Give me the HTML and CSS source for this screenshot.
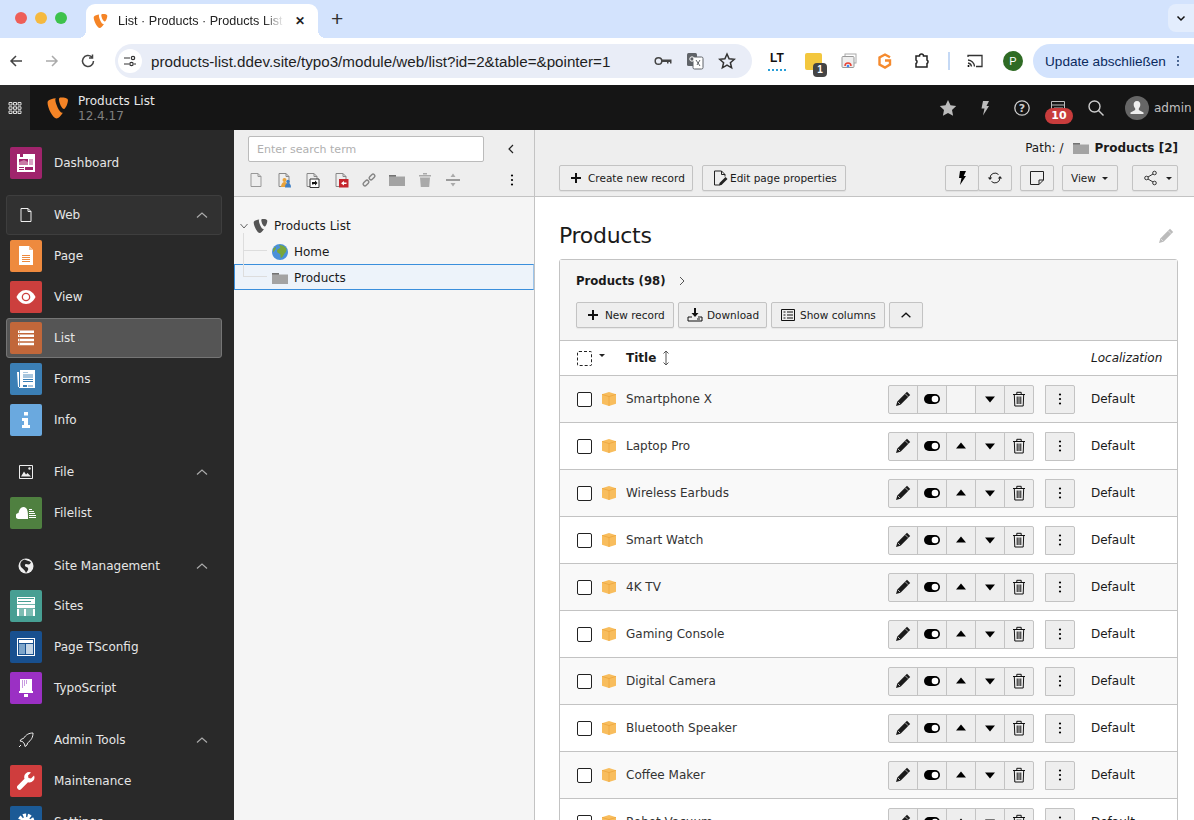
FILE: index.html
```html
<!DOCTYPE html>
<html lang="en">
<head>
  <meta charset="UTF-8" />
  <meta name="viewport" content="width=device-width, initial-scale=1.0" />
  <title>List - Products</title>
  <link rel="stylesheet" href="styles.css">
</head>
<body>
  <svg class="defs" width="0" height="0">
    <symbol id="typo3" viewBox="0 0 16 16"><path d="M11.9 11c-.2.1-.4.1-.6.1-1.8 0-4.4-6.3-4.4-8.4 0-.8.2-1 .4-1.2C5.1 1.7 2.8 2.4 2 3.4c-.2.2-.3.6-.3 1.1C1.7 7.8 5.2 15 7.7 15c1.2 0 3.1-1.9 4.2-4zM10.7 1c2.3 0 4.6.4 4.6 1.7 0 2.7-1.7 5.9-2.6 5.9-1.5 0-3.4-4.2-3.4-6.3C9.3 1.4 9.7 1 10.7 1z"/></symbol>
    <symbol id="chev-up" viewBox="0 0 16 16"><path d="M3 10.500 8 6l5 4.500" fill="none" stroke="currentColor" stroke-width="1.200"/></symbol>
    <symbol id="page" viewBox="0 0 16 16"><path d="M3 1.500h7l3 3v10H3zM10 1.500v3h3" fill="none" stroke="currentColor"/></symbol>
    <symbol id="folder" viewBox="0 0 16 16"><path d="M0 3h7v1.500h9V14H0z" fill="#a3a3a3"/><path d="M0 3h7v1.500H0z" fill="#737373"/></symbol>
    <symbol id="pencil" viewBox="0 0 16 16"><path d="M12 .800 15.200 4 5.500 13.700 1 15l1.300-4.500z" fill="currentColor"/><path d="m10.300 2.800 2.900 2.900M2.800 10.800l2.400 2.400" stroke="#eee" stroke-width=".7"/></symbol>
    <symbol id="toggle" viewBox="0 0 16 16"><rect y="3" width="16" height="10" rx="5"/><circle cx="11" cy="8" r="3.300" fill="#fff"/></symbol>
    <symbol id="tri-up" viewBox="0 0 16 16"><path d="M8 4.500l5 6H3z"/></symbol>
    <symbol id="tri-down" viewBox="0 0 16 16"><path d="M8 11.500l-5-6h10z"/></symbol>
    <symbol id="trash" viewBox="0 0 16 16"><path d="M2 3.500h12M5.800 3.500V1.300h4.400v2.200M3.300 3.500l.5 11.500h8.400l.5-11.500M6.200 5.500v7.500M8 5.500v7.500M9.800 5.500v7.500" fill="none" stroke="#111"/></symbol>
    <symbol id="dots" viewBox="0 0 16 16"><circle cx="8" cy="3.500" r="1.100"/><circle cx="8" cy="8" r="1.100"/><circle cx="8" cy="12.500" r="1.100"/></symbol>
    <symbol id="cube" viewBox="0 0 16 16"><path d="M8 1l7 2.300v9.400L8 15l-7-2.300V3.300z" fill="#f8bd5d"/><path d="M1 3.300 8 5.600l7-2.300M8 5.600V15" fill="none" stroke="#eda63c" stroke-width=".8"/></symbol>
    <symbol id="plus" viewBox="0 0 16 16"><path d="M8 3v10M3 8h10" stroke="#111" stroke-width="2"/></symbol>
  </svg>

  <div class="tabbar">
    <div class="lights"><i class="light red"></i><i class="light amber"></i><i class="light green"></i></div>
    <div class="tab">
      <svg class="tab-logo" width="16" height="16"><use href="#typo3"/></svg>
      <span class="tab-title">List · Products · Products List</span>
      <span class="tab-x">✕</span>
    </div>
    <span class="tab-new">+</span>
    <span class="tab-more"><svg width="12" height="12" viewBox="0 0 12 12"><path d="M2.500 4.500 6 8l3.500-3.500" fill="none" stroke="#111" stroke-width="1.500"/></svg></span>
  </div>

  <div class="toolbar">
    <svg class="nav" width="16" height="16" viewBox="0 0 16 16"><path d="M14 8H3M8 3 3 8l5 5" fill="none" stroke="#444" stroke-width="1.500"/></svg>
    <svg class="nav" width="16" height="16" viewBox="0 0 16 16"><path d="M2 8h11M8 3l5 5-5 5" fill="none" stroke="#aaa" stroke-width="1.500"/></svg>
    <svg class="nav" width="16" height="16" viewBox="0 0 16 16"><path d="M13.500 8A5.500 5.500 0 1 1 11.800 4M12.500 1.500V5H9" fill="none" stroke="#444" stroke-width="1.500"/></svg>
    <div class="omnibox">
      <span class="site-icon"><svg width="14" height="14" viewBox="0 0 14 14"><path d="M1 4h6M11 10h2M1 10h5" stroke="#333" stroke-width="1.200"/><circle cx="10" cy="4" r="1.700" fill="none" stroke="#333" stroke-width="1.200"/><circle cx="8.500" cy="10" r="1.700" fill="none" stroke="#333" stroke-width="1.200"/></svg></span>
      <span class="url">products-list.ddev.site/typo3/module/web/list?id=2&amp;table=&amp;pointer=1</span>
      <svg class="omni-icon" width="18" height="18" viewBox="0 0 18 18"><circle cx="4.500" cy="9" r="3.300" fill="none" stroke="#444" stroke-width="1.500"/><path d="M7.500 7.500h10v4h-1.500V10h-1.500v1.500H13V10H7.500z" fill="#444"/></svg>
      <svg class="omni-icon" width="18" height="18" viewBox="0 0 18 18"><rect x="1" y="1" width="10" height="13" rx="1.500" fill="#5f6368"/><rect x="7" y="5" width="10" height="12" rx="1.500" fill="#fff" stroke="#5f6368"/><path d="m10 8 4 6M14 8l-3 5" stroke="#5f6368"/><circle cx="6" cy="7" r="2.200" fill="none" stroke="#fff"/></svg>
      <svg class="omni-icon" width="18" height="18" viewBox="0 0 18 18"><path d="M9 2l2.100 4.800 5.200.5-3.900 3.400 1.200 5.100L9 13.100l-4.600 2.700 1.200-5.100-3.900-3.400 5.200-.5z" fill="none" stroke="#333" stroke-width="1.500"/></svg>
    </div>
    <div class="ext-icons">
      <span class="ext ext-lt">LT</span>
      <span class="ext ext-yellow"><b>1</b></span>
      <svg class="ext" width="16" height="16" viewBox="0 0 16 16"><rect x="4" y="1" width="11" height="9" fill="none" stroke="#aaa"/><rect x="1" y="3.500" width="12" height="11" rx="1" fill="#eee" stroke="#999"/><path d="M4 13a3 3 0 0 1 6 0" fill="none" stroke="#e94235" stroke-width="1.500"/><circle cx="7" cy="13" r="1.300" fill="#4285f4"/></svg>
      <svg class="ext" width="18" height="18" viewBox="0 0 18 18"><path d="M14 5.300 9 2.500 3.500 5.500v7L9 15.500l5-3V8.500H9" fill="none" stroke="#f58a2e" stroke-width="2.400"/></svg>
      <svg class="ext" width="18" height="18" viewBox="0 0 18 18"><path d="M3 4h3.500a2 2 0 0 1 4 0H14v4a2 2 0 0 1 0 3.500V15H3v-3.500a2 2 0 0 0 0-3.500z" fill="none" stroke="#222" stroke-width="1.500"/></svg>
      <i class="ext-sep"></i>
      <svg class="ext" width="18" height="18" viewBox="0 0 18 18"><path d="M2 5V3.500h14v11h-6M2 8a7 7 0 0 1 6.500 6.500M2 11a4 4 0 0 1 3.500 3.500" fill="none" stroke="#333" stroke-width="1.300"/><circle cx="2.500" cy="14" r="1"/></svg>
      <span class="avatar-p">P</span>
    </div>
    <div class="update"><span>Update abschließen</span><svg width="14" height="16" fill="#1b3a6b"><use href="#dots"/></svg></div>
  </div>

  <header class="topbar">
    <div class="menu-toggle">
      <svg width="14" height="14" viewBox="0 0 14 14" fill="none" stroke="#ddd"><path d="M1 1.500h3v2.500H1zM5.500 1.500h3v2.500h-3zM10 1.500h3v2.500h-3zM1 5.800h3v2.500H1zM5.500 5.800h3v2.500h-3zM10 5.800h3v2.500h-3zM1 10h3v2.500H1zM5.500 10h3v2.500h-3zM10 10h3v2.500h-3z"/></svg>
    </div>
    <svg class="brand-logo" width="24" height="24" fill="#f58426"><use href="#typo3"/></svg>
    <div class="brand">
      <div class="brand-name">Products List</div>
      <div class="brand-version">12.4.17</div>
    </div>
    <div class="top-tools">
      <svg class="top-tool" width="18" height="18" viewBox="0 0 18 18" fill="#bbb"><path d="M9 1l2.500 5.300 5.700.7-4.200 4 1.100 5.800L9 14l-5.100 2.800L5 11 .8 7l5.700-.7z"/></svg>
      <svg class="top-tool" width="18" height="18" viewBox="0 0 18 18" fill="#bbb"><path d="M7 2h6l-2.500 5H13l-6 9.500L8.500 9.500H5.500z"/></svg>
      <svg class="top-tool" width="18" height="18" viewBox="0 0 18 18"><circle cx="9" cy="9" r="7.200" fill="none" stroke="#ccc" stroke-width="1.300"/><text class="help-mark" x="9" y="13" text-anchor="middle">?</text></svg>
      <span class="top-tool notes">
        <svg width="16" height="16" viewBox="0 0 16 16" fill="none" stroke="#bbb"><path d="M1.500 1.500h13v13h-13zM1.500 5h13M4 8h9M4 11h9"/></svg>
        <b class="badge">10</b>
      </span>
      <svg class="top-tool" width="18" height="18" viewBox="0 0 18 18" fill="none" stroke="#ccc" stroke-width="1.400"><circle cx="7.500" cy="7.500" r="5.500"/><path d="m11.500 11.500 5 5"/></svg>
      <span class="user-pic"><svg width="24" height="24" viewBox="0 0 24 24"><circle cx="12" cy="12" r="12" fill="#666"/><path d="M12 5c2.400 0 3.600 1.800 3.300 4.200-.2 1.300-.8 2.500-1.500 3.200v1.600l4.700 2.500V18h-13v-1.500l4.700-2.500v-1.600c-.7-.7-1.300-1.900-1.500-3.200C8.400 6.800 9.600 5 12 5z" fill="#eee"/></svg></span>
      <span class="user-name">admin</span>
    </div>
  </header>

  <div class="main">
    <nav class="sidebar">
      <a class="mod"><span class="mod-icon c-dash"><svg width="18" height="18" viewBox="0 0 18 18"><path d="M0 0h18v18H0z" fill="#fff"/><path d="M2 5h9v6H2z" fill="#a0246c"/><path d="M2 8l5-2 4 2v3H2z" fill="#c97aa6"/><path d="M12 5h4v6h-4z" fill="#d9a3c4"/><path d="M2 13h5v1H2zM8 13h8v3H8zM2 15h5v1H2z" fill="#a0246c"/><path d="M3 0h3v3H3z" fill="#a0246c"/></svg></span>Dashboard</a>

      <section class="mod-group">
        <div class="group-head group-open"><span class="group-icon"><svg width="16" height="16" color="#eee"><use href="#page"/></svg></span>Web<svg class="group-chev" width="16" height="16"><use href="#chev-up"/></svg></div>
        <a class="mod"><span class="mod-icon c-page"><svg width="16" height="20" viewBox="0 0 16 20"><path d="M1 0h10l4 4v15H1z" fill="#fff"/><path d="M11 0l4 4h-4z" fill="#f6bd8f"/><path d="M4 9h8v1H4zM4 11h8v1H4zM4 13h8v1H4zM4 15h8v1H4z" fill="#ee8a3e"/></svg></span>Page</a>
        <a class="mod"><span class="mod-icon c-view"><svg width="20" height="14" viewBox="0 0 20 14"><path d="M10 0c4.500 0 8 3.500 9.500 7C18 10.500 14.500 14 10 14S2 10.500.5 7C2 3.500 5.500 0 10 0z" fill="#fff"/><circle cx="10" cy="7" r="4.300" fill="#cc3f3d"/><circle cx="10" cy="7" r="3" fill="#fff"/></svg></span>View</a>
        <a class="mod mod-active"><span class="mod-icon c-list"><svg width="16" height="16" viewBox="0 0 16 16" fill="#fff"><path d="M0 .500h16V3H0zM0 4.500h16V7H0zM0 8.700h16v2.500H0zM0 12.800h16v2.500H0z"/><path d="M1 1.300h1v1H1zM1 5.300h1v1H1zM1 9.500h1v1H1zM1 13.600h1v1H1z" fill="#c1673a"/></svg></span>List</a>
        <a class="mod"><span class="mod-icon c-forms"><svg width="18" height="18" viewBox="0 0 18 18"><path d="M3 0h15v18H3z" fill="#fff"/><path d="M0 2h2v16h1v-1H1z" fill="#fff"/><path d="M6 2h5v1H6zM6 4h10v4H6z" fill="#a8c6de"/><path d="M6 9h10v1H6zM6 11h10v1H6zM6 15h4v2H6z" fill="#3b7fb5"/><path d="M11 15h5v2h-5z" fill="#a8c6de"/></svg></span>Forms</a>
        <a class="mod"><span class="mod-icon c-info"><svg width="10" height="16" viewBox="0 0 10 16" fill="#fff"><path d="M3 0h4v3.500H3zM1 6h6v7h2v3H1v-3h2V9H1z"/></svg></span>Info</a>
      </section>

      <section class="mod-group">
        <div class="group-head"><span class="group-icon"><svg width="14" height="14" viewBox="0 0 14 14"><path d="M.5.500h13v13H.5z" fill="none" stroke="#eee"/><path d="M2 11.500l3-5 2 3 1.500-1.500 3.500 3.500z" fill="#eee"/><circle cx="10.500" cy="3.500" r="1.200" fill="#eee"/></svg></span>File<svg class="group-chev" width="16" height="16"><use href="#chev-up"/></svg></div>
        <a class="mod"><span class="mod-icon c-file"><svg width="20" height="12" viewBox="0 0 20 12" fill="#fff"><path d="M3 12a3 3 0 0 1-.500-6C3 2.500 5 0 7.500 0S11 2 11.500 4c.500 2 .500 5 .500 8z"/><path d="M13 2h3v1h-3zM13 4h5v1h-5zM13 6h6v1h-6zM13 8h7v1h-7zM13 10h7v1h-7z"/></svg></span>Filelist</a>
      </section>

      <section class="mod-group mod-group-site">
        <div class="group-head"><span class="group-icon"><svg width="16" height="16" viewBox="0 0 16 16"><circle cx="8" cy="8" r="7.500" fill="#eee"/><path d="M6 1.500c2.500 1 5 1 7 3-1 1-1 2-2.500 2S7.500 5 7 7s2 1.500 3 3-1 3.500-2 5C7 12 5 11 3.500 9.500S2 5.500 3 4s2-2 3-2.500z" fill="#292929"/></svg></span>Site Management<svg class="group-chev" width="16" height="16"><use href="#chev-up"/></svg></div>
        <a class="mod"><span class="mod-icon c-sites"><svg width="18" height="19" viewBox="0 0 18 19"><path d="M0 0h18v19H0z" fill="#fff"/><path d="M1 1h16v1H1zM1 4h13v1H1z" fill="#479f93"/><path d="M0 7h18v.8H0zM0 11h18v.8H0z" fill="#479f93"/><path d="M2 12h5v7H2zM9 12h7v7H9z" fill="#7dbdb3"/></svg></span>Sites</a>
        <a class="mod"><span class="mod-icon c-tsconfig"><svg width="18" height="18" viewBox="0 0 18 18"><path d="M0 0h18v18H0z" fill="#fff"/><path d="M1 1h16v16H1z" fill="#18508f"/><path d="M2 2h14v3H2z" fill="#fff"/><path d="M2 6h6v10H2z" fill="#7da5ca"/><path d="M9 6h7v10H9z" fill="#c5d6e6"/></svg></span>Page TSconfig</a>
        <a class="mod"><span class="mod-icon c-ts"><svg width="14" height="18" viewBox="0 0 14 18"><path d="M1 0h12v12H1z" fill="#fff"/><path d="M3 1h1v8H3zM5 1h1v6H5zM7 1h1v4H7z" fill="#c89be0"/><path d="M0 12h14v2H0zM5 15h4v3H5z" fill="#fff"/></svg></span>TypoScript</a>
      </section>

      <section class="mod-group">
        <div class="group-head"><span class="group-icon"><svg width="16" height="16" viewBox="0 0 16 16" fill="none" stroke="#eee"><path d="M15 1c-4 0-7 1.500-9.500 5.500l-2 .5L2 9l2.500.5L6.500 12l.5 2.500 2-1.500.500-2C13.500 8 15 5 15 1z"/><path d="M1 15l2-2"/></svg></span>Admin Tools<svg class="group-chev" width="16" height="16"><use href="#chev-up"/></svg></div>
        <a class="mod"><span class="mod-icon c-maint"><svg width="18" height="18" viewBox="0 0 18 18"><path d="M17 3.500 14 6.500l-2.500-.500-.500-2.500L14 .500A5 5 0 0 0 7.500 6.800L.800 13.500a2.300 2.300 0 0 0 3.500 3.500l6.700-6.700A5 5 0 0 0 17 3.500z" fill="#fff"/></svg></span>Maintenance</a>
        <a class="mod"><span class="mod-icon c-settings"><svg width="18" height="18" viewBox="0 0 18 18"><circle cx="9" cy="9" r="6.500" fill="none" stroke="#fff" stroke-width="4" stroke-dasharray="3 1.500"/><circle cx="9" cy="9" r="5" fill="#fff"/><circle cx="9" cy="9" r="2" fill="#1b5a96"/></svg></span>Settings</a>
      </section>
    </nav>

    <aside class="tree-panel">
      <div class="tree-head">
        <div class="tree-search">
          <input class="search-input" type="text" placeholder="Enter search term">
          <svg class="tree-collapse" width="12" height="12" viewBox="0 0 12 12"><path d="M8 2 4 6l4 4" fill="none" stroke="#222" stroke-width="1.200"/></svg>
        </div>
        <div class="tree-actions">
          <span class="tree-act"><svg width="16" height="16" color="#999"><use href="#page"/></svg></span>
          <span class="tree-act"><svg width="16" height="16" viewBox="0 0 16 16"><use href="#page" color="#888"/><circle cx="8.500" cy="8" r="2" fill="#e8a33d"/><path d="M5 15c0-3 1.500-5 3.500-5s3.500 2 3.500 5z" fill="#e8a33d"/><circle cx="12" cy="9.500" r="1.700" fill="#3f7fc4"/><path d="M9 15.500c0-3 1.200-4.500 3-4.500s3 1.500 3 4.500z" fill="#3f7fc4"/></svg></span>
          <span class="tree-act"><svg width="16" height="16" viewBox="0 0 16 16"><use href="#page" color="#888"/><path d="M6 7h9v8.500H6z" fill="#fff" stroke="#333"/><path d="M8 12.500V10h3V8.500l2.500 2.500-2.500 2.500V12H9.500v.5z" fill="#111"/></svg></span>
          <span class="tree-act"><svg width="16" height="16" viewBox="0 0 16 16"><use href="#page" color="#888"/><path d="M6 7h9.500v8.500H6z" fill="#c5252c"/><path d="M13.500 10.500H11V9l-3 2.200 3 2.300V12h2.500z" fill="#fff"/></svg></span>
          <span class="tree-act"><svg width="16" height="16" viewBox="0 0 16 16" fill="none" stroke="#888" stroke-width="1.500"><rect x="-3" y="-1.800" width="6.500" height="3.600" rx="1.800" transform="translate(4.800 11.200) rotate(-45)"/><rect x="-3.500" y="-1.800" width="6.500" height="3.600" rx="1.800" transform="translate(11.200 4.800) rotate(-45)"/></svg></span>
          <span class="tree-act"><svg width="16" height="16"><use href="#folder"/></svg></span>
          <span class="tree-act"><svg width="16" height="16" viewBox="0 0 16 16" fill="#aaa"><path d="M2 3h12v1.500H2zM6 1h4v1.500H6zM3 5.500h10l-.8 9.500H3.800z"/></svg></span>
          <span class="tree-act"><svg width="16" height="16" viewBox="0 0 16 16" fill="#777"><path d="M1 7.300h14v1.400H1z"/><path d="M8 1.500l2.500 3.500h-5zM8 14.500l2.500-3.500h-5z" fill="#aaa"/></svg></span>
          <span class="tree-more"><svg width="16" height="16"><use href="#dots"/></svg></span>
        </div>
      </div>
      <div class="tree">
        <i class="tree-line-v"></i><i class="tree-line-h1"></i><i class="tree-line-h2"></i>
        <svg class="tree-toggle" width="10" height="10" viewBox="0 0 10 10"><path d="M1.500 3 5 7l3.500-4" fill="none" stroke="#666"/></svg>
        <div class="tree-node tree-root"><svg width="16" height="16" fill="#555"><use href="#typo3"/></svg>Products List</div>
        <div class="tree-node"><svg width="16" height="16" viewBox="0 0 16 16"><circle cx="8" cy="8" r="8" fill="#4a90d9"/><path d="M7 1c3 0 5 1 7 3 1 2 0 4-1 5s-2 4-4 5c-1-2 0-3-1-4S5 9 5 7s2-2 3-3-1-2-1-3z" fill="#79a63a"/><path d="M1 5c1-1 2-2 3-2 0 1 0 2-1 3S2 8 1 8z" fill="#79a63a"/></svg>Home</div>
        <div class="tree-node tree-selected"><svg width="16" height="16"><use href="#folder"/></svg>Products</div>
      </div>
    </aside>

    <main class="content">
      <div class="docheader">
        <div class="path">Path: / <svg class="path-folder" width="16" height="16"><use href="#folder"/></svg> <b>Products [2]</b></div>
        <div class="doc-buttons">
          <a class="btn btn-create"><svg width="16" height="16"><use href="#plus"/></svg>Create new record</a>
          <a class="btn btn-edit"><svg width="16" height="16" viewBox="0 0 16 16"><path d="M9.500 1H2.500v14h5M9.500 1l3.500 3.500v2M9.500 1v3.500H13" fill="none" stroke="#222"/><path d="M13.500 7l2 2-6 6-2.500.5.500-2.500z" fill="#222"/></svg>Edit page properties</a>
          <span class="spacer"></span>
          <div class="btn-group">
            <a class="btn btn-icon"><svg width="16" height="16" viewBox="0 0 16 16"><path d="M6 1h6L9.700 6H12L6 15l1.500-7H5z"/></svg></a>
            <a class="btn btn-icon"><svg width="16" height="16" viewBox="0 0 16 16" fill="none" stroke="#222"><path d="M3 8a5 5 0 0 1 8.500-3.500M13 8a5 5 0 0 1-8.500 3.500"/><path d="M.8 7.500h4.400L3 10zM10.800 8.500h4.400L13 6z" fill="#222" stroke="none"/></svg></a>
          </div>
          <a class="btn btn-icon btn-note"><svg width="16" height="16" viewBox="0 0 16 16"><path d="M1.500 1.500h13V10L10 14.500H1.500zM14.500 10H10v4.500" fill="none" stroke="#222"/></svg></a>
          <a class="btn btn-view">View<i class="caret"></i></a>
          <a class="btn btn-share"><svg width="16" height="16" viewBox="0 0 16 16" fill="none" stroke="#333"><circle cx="3.500" cy="8" r="1.800"/><circle cx="11.500" cy="3" r="1.800"/><circle cx="11.500" cy="13" r="1.800"/><path d="M5 7l5-3M5 9l5 3"/></svg><i class="caret"></i></a>
        </div>
      </div>

      <div class="body">
        <div class="title-row">
          <h1>Products</h1>
          <svg width="16" height="16" viewBox="0 0 16 16" color="#bbb"><use href="#pencil"/></svg>
        </div>

        <section class="panel">
          <div class="panel-head">
            <div class="panel-title"><b>Products (98)</b><svg width="10" height="10" viewBox="0 0 10 10"><path d="M3 1l4 4-4 4" fill="none" stroke="#555"/></svg></div>
            <div class="panel-buttons">
              <a class="btn btn-new"><svg width="16" height="16"><use href="#plus"/></svg>New record</a>
              <a class="btn btn-download"><svg width="16" height="16" viewBox="0 0 16 16"><path d="M8 1v6" stroke="#111" stroke-width="2"/><path d="M4.500 6h7L8 10z" fill="#111"/><path d="M5 10H1v4h14v-4h-4" fill="none" stroke="#111"/><path d="M10 12h3" stroke="#111"/></svg>Download</a>
              <a class="btn btn-cols"><svg width="16" height="16" viewBox="0 0 16 16" fill="none" stroke="#111"><path d="M1.500 2.500h13v11h-13zM3.500 5h2M3.500 8h2M3.500 11h2M7 5h6M7 8h6M7 11h6"/></svg>Show columns</a>
              <a class="btn btn-up"><svg width="14" height="14" viewBox="0 0 16 16"><path d="M3 10.500 8 6l5 4.500" fill="none" stroke="#111" stroke-width="1.500"/></svg></a>
            </div>
          </div>

          <table class="records">
            <colgroup>
              <col class="w-check"><col class="w-icon"><col><col class="w-actions"><col class="w-lang">
            </colgroup>
            <thead>
              <tr>
                <th class="col-check" colspan="2"><span class="check check-dashed"></span><i class="caret"></i></th>
                <th class="col-title"><div class="title-head">Title<svg width="10" height="16" viewBox="0 0 10 16" fill="none" stroke="#555"><path d="M5 1v14M2.500 3.500 5 1l2.500 2.500M2.500 12.500 5 15l2.500-2.500"/></svg></div></th>
                <th></th>
                <th class="col-lang">Localization</th>
              </tr>
            </thead>
            <tbody>
              <tr>
                <td class="col-check"><span class="check"></span></td>
                <td><svg class="cube" width="16" height="16"><use href="#cube"/></svg></td>
                <td class="col-name">Smartphone X</td>
                <td><div class="actions"><div class="act-group"><a class="act"><svg width="16" height="16"><use href="#pencil"/></svg></a><a class="act"><svg width="16" height="16"><use href="#toggle"/></svg></a><a class="act act-blank"></a><a class="act"><svg width="16" height="16"><use href="#tri-down"/></svg></a><a class="act"><svg width="16" height="16"><use href="#trash"/></svg></a></div><a class="act act-more"><svg width="16" height="16"><use href="#dots"/></svg></a></div></td>
                <td class="col-lang">Default</td>
              </tr>
              <tr>
                <td class="col-check"><span class="check"></span></td>
                <td><svg class="cube" width="16" height="16"><use href="#cube"/></svg></td>
                <td class="col-name">Laptop Pro</td>
                <td><div class="actions"><div class="act-group"><a class="act"><svg width="16" height="16"><use href="#pencil"/></svg></a><a class="act"><svg width="16" height="16"><use href="#toggle"/></svg></a><a class="act"><svg width="16" height="16"><use href="#tri-up"/></svg></a><a class="act"><svg width="16" height="16"><use href="#tri-down"/></svg></a><a class="act"><svg width="16" height="16"><use href="#trash"/></svg></a></div><a class="act act-more"><svg width="16" height="16"><use href="#dots"/></svg></a></div></td>
                <td class="col-lang">Default</td>
              </tr>
              <tr>
                <td class="col-check"><span class="check"></span></td>
                <td><svg class="cube" width="16" height="16"><use href="#cube"/></svg></td>
                <td class="col-name">Wireless Earbuds</td>
                <td><div class="actions"><div class="act-group"><a class="act"><svg width="16" height="16"><use href="#pencil"/></svg></a><a class="act"><svg width="16" height="16"><use href="#toggle"/></svg></a><a class="act"><svg width="16" height="16"><use href="#tri-up"/></svg></a><a class="act"><svg width="16" height="16"><use href="#tri-down"/></svg></a><a class="act"><svg width="16" height="16"><use href="#trash"/></svg></a></div><a class="act act-more"><svg width="16" height="16"><use href="#dots"/></svg></a></div></td>
                <td class="col-lang">Default</td>
              </tr>
              <tr>
                <td class="col-check"><span class="check"></span></td>
                <td><svg class="cube" width="16" height="16"><use href="#cube"/></svg></td>
                <td class="col-name">Smart Watch</td>
                <td><div class="actions"><div class="act-group"><a class="act"><svg width="16" height="16"><use href="#pencil"/></svg></a><a class="act"><svg width="16" height="16"><use href="#toggle"/></svg></a><a class="act"><svg width="16" height="16"><use href="#tri-up"/></svg></a><a class="act"><svg width="16" height="16"><use href="#tri-down"/></svg></a><a class="act"><svg width="16" height="16"><use href="#trash"/></svg></a></div><a class="act act-more"><svg width="16" height="16"><use href="#dots"/></svg></a></div></td>
                <td class="col-lang">Default</td>
              </tr>
              <tr>
                <td class="col-check"><span class="check"></span></td>
                <td><svg class="cube" width="16" height="16"><use href="#cube"/></svg></td>
                <td class="col-name">4K TV</td>
                <td><div class="actions"><div class="act-group"><a class="act"><svg width="16" height="16"><use href="#pencil"/></svg></a><a class="act"><svg width="16" height="16"><use href="#toggle"/></svg></a><a class="act"><svg width="16" height="16"><use href="#tri-up"/></svg></a><a class="act"><svg width="16" height="16"><use href="#tri-down"/></svg></a><a class="act"><svg width="16" height="16"><use href="#trash"/></svg></a></div><a class="act act-more"><svg width="16" height="16"><use href="#dots"/></svg></a></div></td>
                <td class="col-lang">Default</td>
              </tr>
              <tr>
                <td class="col-check"><span class="check"></span></td>
                <td><svg class="cube" width="16" height="16"><use href="#cube"/></svg></td>
                <td class="col-name">Gaming Console</td>
                <td><div class="actions"><div class="act-group"><a class="act"><svg width="16" height="16"><use href="#pencil"/></svg></a><a class="act"><svg width="16" height="16"><use href="#toggle"/></svg></a><a class="act"><svg width="16" height="16"><use href="#tri-up"/></svg></a><a class="act"><svg width="16" height="16"><use href="#tri-down"/></svg></a><a class="act"><svg width="16" height="16"><use href="#trash"/></svg></a></div><a class="act act-more"><svg width="16" height="16"><use href="#dots"/></svg></a></div></td>
                <td class="col-lang">Default</td>
              </tr>
              <tr>
                <td class="col-check"><span class="check"></span></td>
                <td><svg class="cube" width="16" height="16"><use href="#cube"/></svg></td>
                <td class="col-name">Digital Camera</td>
                <td><div class="actions"><div class="act-group"><a class="act"><svg width="16" height="16"><use href="#pencil"/></svg></a><a class="act"><svg width="16" height="16"><use href="#toggle"/></svg></a><a class="act"><svg width="16" height="16"><use href="#tri-up"/></svg></a><a class="act"><svg width="16" height="16"><use href="#tri-down"/></svg></a><a class="act"><svg width="16" height="16"><use href="#trash"/></svg></a></div><a class="act act-more"><svg width="16" height="16"><use href="#dots"/></svg></a></div></td>
                <td class="col-lang">Default</td>
              </tr>
              <tr>
                <td class="col-check"><span class="check"></span></td>
                <td><svg class="cube" width="16" height="16"><use href="#cube"/></svg></td>
                <td class="col-name">Bluetooth Speaker</td>
                <td><div class="actions"><div class="act-group"><a class="act"><svg width="16" height="16"><use href="#pencil"/></svg></a><a class="act"><svg width="16" height="16"><use href="#toggle"/></svg></a><a class="act"><svg width="16" height="16"><use href="#tri-up"/></svg></a><a class="act"><svg width="16" height="16"><use href="#tri-down"/></svg></a><a class="act"><svg width="16" height="16"><use href="#trash"/></svg></a></div><a class="act act-more"><svg width="16" height="16"><use href="#dots"/></svg></a></div></td>
                <td class="col-lang">Default</td>
              </tr>
              <tr>
                <td class="col-check"><span class="check"></span></td>
                <td><svg class="cube" width="16" height="16"><use href="#cube"/></svg></td>
                <td class="col-name">Coffee Maker</td>
                <td><div class="actions"><div class="act-group"><a class="act"><svg width="16" height="16"><use href="#pencil"/></svg></a><a class="act"><svg width="16" height="16"><use href="#toggle"/></svg></a><a class="act"><svg width="16" height="16"><use href="#tri-up"/></svg></a><a class="act"><svg width="16" height="16"><use href="#tri-down"/></svg></a><a class="act"><svg width="16" height="16"><use href="#trash"/></svg></a></div><a class="act act-more"><svg width="16" height="16"><use href="#dots"/></svg></a></div></td>
                <td class="col-lang">Default</td>
              </tr>
              <tr>
                <td class="col-check"><span class="check"></span></td>
                <td><svg class="cube" width="16" height="16"><use href="#cube"/></svg></td>
                <td class="col-name">Robot Vacuum</td>
                <td><div class="actions"><div class="act-group"><a class="act"><svg width="16" height="16"><use href="#pencil"/></svg></a><a class="act"><svg width="16" height="16"><use href="#toggle"/></svg></a><a class="act"><svg width="16" height="16"><use href="#tri-up"/></svg></a><a class="act"><svg width="16" height="16"><use href="#tri-down"/></svg></a><a class="act"><svg width="16" height="16"><use href="#trash"/></svg></a></div><a class="act act-more"><svg width="16" height="16"><use href="#dots"/></svg></a></div></td>
                <td class="col-lang">Default</td>
              </tr>
            </tbody>
          </table>
        </section>
      </div>
    </main>
  </div>
</body>
</html>
```

FILE: styles.css
```css
html, body {
  height: 820px;
  overflow: hidden;
}

body {
  margin: 0;
  font-family: 'DejaVu Sans', sans-serif;
  font-size: 12px;
  color: #1a1a1a;
  background: #fff;
  display: flex;
  flex-direction: column;
}

svg {
  display: block;
  flex: none;
}

.defs {
  position: absolute;
}

/* browser chrome */
.tabbar {
  height: 38px;
  flex: none;
  background: #d3e3fd;
  display: flex;
  align-items: flex-end;
  font-family: 'Liberation Sans', sans-serif;
}

.lights {
  display: flex;
  gap: 8px;
  padding: 0 0 14px 15px;
  width: 71px;
  box-sizing: border-box;
}

.light {
  width: 12px;
  height: 12px;
  border-radius: 50%;
}

.red { background: #ee5f58; }
.amber { background: #f5b93f; }
.green { background: #3dc24c; }

.tab {
  width: 232px;
  height: 34px;
  margin-left: 15px;
  background: #fff;
  border-radius: 9px 9px 0 0;
  display: flex;
  align-items: center;
  padding: 0 10px 0 6px;
  box-sizing: border-box;
  position: relative;
}

.tab::before, .tab::after {
  content: "";
  position: absolute;
  bottom: 0;
  width: 8px;
  height: 8px;
}

.tab::before {
  left: -8px;
  background: radial-gradient(circle at 0 0, transparent 8px, #fff 8px);
}

.tab::after {
  right: -8px;
  background: radial-gradient(circle at 100% 0, transparent 8px, #fff 8px);
}

.tab-logo {
  fill: #f58426;
  margin-right: 10px;
}

.tab-title {
  font-size: 12.600px;
  width: 166px;
  white-space: nowrap;
  overflow: hidden;
  color: #222;
  -webkit-mask-image: linear-gradient(90deg, #000 88%, transparent);
  mask-image: linear-gradient(90deg, #000 88%, transparent);
}

.tab-x {
  margin-left: 11px;
  font-size: 12px;
  font-weight: 700;
  color: #222;
}

.tab-new {
  margin: 0 0 5px 13px;
  font-size: 21px;
  line-height: 28px;
  color: #333;
}

.tab-more {
  margin: 0 0 6px auto;
  width: 26px;
  height: 28px;
  border-radius: 8px 0 0 8px;
  background: #e3edfd;
  display: flex;
  align-items: center;
  justify-content: center;
}

.toolbar {
  height: 47px;
  flex: none;
  box-sizing: border-box;
  padding: 6px 0 7px 8px;
  display: flex;
  align-items: center;
  font-family: 'Liberation Sans', sans-serif;
}

.nav {
  margin-right: 20px;
}

.toolbar .nav:nth-child(3) {
  margin-right: 19px;
}

.omnibox {
  width: 637px;
  height: 34px;
  background: #e9edf7;
  border-radius: 17px;
  display: flex;
  align-items: center;
  padding: 0 16px 0 3px;
  box-sizing: border-box;
}

.site-icon {
  width: 24px;
  height: 24px;
  background: #fff;
  border-radius: 50%;
  display: flex;
  align-items: center;
  justify-content: center;
}

.url {
  margin-left: 9px;
  font-size: 15.200px;
  color: #1f1f1f;
  white-space: nowrap;
  flex: 1;
}

.omni-icon {
  margin-left: 14px;
}

.ext-icons {
  display: flex;
  align-items: center;
  margin-left: 16px;
  width: 265px;
}

.ext {
  margin-right: 19px;
}

.ext-lt {
  width: 18px;
  height: 20px;
  font-size: 12px;
  font-weight: 700;
  line-height: 14px;
  text-align: center;
  color: #111;
  border-bottom: 2px dotted #2a9fd8;
  box-sizing: border-box;
}

.ext-yellow {
  width: 17px;
  height: 17px;
  background: #f3c73e;
  border-radius: 2px;
  position: relative;
}

.ext-yellow b {
  position: absolute;
  left: 8px;
  top: 10px;
  width: 14px;
  height: 14px;
  background: #444;
  color: #fff;
  border-radius: 4px;
  font-size: 10px;
  line-height: 14px;
  text-align: center;
}

.ext-sep {
  width: 2px;
  height: 18px;
  background: #c5d9f5;
  margin: 0 16px 0 -2px;
}

.avatar-p {
  width: 20px;
  height: 20px;
  border-radius: 50%;
  background: #2f6b24;
  color: #fff;
  font-size: 11px;
  line-height: 20px;
  text-align: center;
}

.update {
  position: absolute;
  left: 1033px;
  top: 44px;
  width: 175px;
  height: 34px;
  background: #d3e3fd;
  border-radius: 17px;
  display: flex;
  align-items: center;
  gap: 5px;
  padding-left: 12px;
  box-sizing: border-box;
  font-size: 13.600px;
  color: #0a2a5e;
}

/* typo3 top bar */
.topbar {
  height: 45px;
  flex: none;
  background: #151515;
  display: flex;
  align-items: center;
  color: #ddd;
}

.menu-toggle {
  width: 30px;
  height: 45px;
  background: #2b2b2b;
  display: flex;
  align-items: center;
  justify-content: center;
}

.brand-logo {
  margin: 0 9px 0 15px;
}

.brand {
  padding-top: 2px;
}

.brand-name {
  color: #e8e8e8;
  line-height: 15px;
}

.brand-version {
  color: #808080;
  line-height: 15px;
}

.top-tools {
  margin-left: auto;
  display: flex;
  align-items: center;
}

.top-tool {
  margin-right: 19px;
}

.help-mark {
  font-family: 'DejaVu Sans', sans-serif;
  font-size: 11px;
  font-weight: 700;
  fill: #ccc;
}

.notes {
  position: relative;
  display: block;
  margin-right: 21px;
}

.badge {
  position: absolute;
  left: -5px;
  top: 8px;
  width: 28px;
  height: 16px;
  background: #c83c3c;
  color: #fff;
  border-radius: 8px;
  font-size: 11px;
  line-height: 16px;
  text-align: center;
}

.user-pic {
  margin-left: 1px;
  margin-right: 5px;
}

.user-name {
  color: #c0c0c0;
  width: 40px;
  white-space: nowrap;
  overflow: hidden;
}

/* layout */
.main {
  flex: 1;
  display: flex;
  min-height: 0;
}

.sidebar {
  width: 234px;
  flex: none;
  background: #292929;
  color: #e6e6e6;
  box-sizing: border-box;
  padding: 13px 12px 0 6px;
  overflow: hidden;
}

.mod {
  height: 40px;
  display: flex;
  align-items: center;
  box-sizing: border-box;
  margin-bottom: 1px;
  border: 1px solid transparent;
  border-radius: 3px;
}

.mod-active {
  background: #555;
  border-color: #757575;
}

.mod-icon {
  width: 32px;
  height: 32px;
  margin: 0 12px 0 3px;
  border-radius: 2px;
  display: flex;
  align-items: center;
  justify-content: center;
}

.c-dash { background: #a0246c; }
.c-page { background: #ee8a3e; }
.c-view { background: #cc3f3d; }
.c-list { background: #c1673a; }
.c-forms { background: #3b7fb5; }
.c-info { background: #6aa9df; }
.c-file { background: #4f8040; }
.c-sites { background: #479f93; }
.c-tsconfig { background: #18508f; }
.c-ts { background: #9b30c4; }
.c-maint { background: #cf3d3d; }
.c-settings { background: #1b5a96; }

.mod-group {
  margin-top: 12px;
}

.group-head {
  height: 40px;
  display: flex;
  align-items: center;
  box-sizing: border-box;
  border: 1px solid transparent;
  border-radius: 3px;
  margin-bottom: 1px;
}

.mod-group-site {
  margin-top: 13px;
}

.mod-group-site .group-head {
  margin-bottom: 0;
}

.group-open {
  background: #313131;
  border-color: #3e3e3e;
}

.group-icon {
  width: 32px;
  margin: 0 12px 0 3px;
  display: flex;
  justify-content: center;
}

.group-chev {
  margin-left: auto;
  margin-right: 11px;
  color: #aaa;
}

/* page tree */
.tree-panel {
  width: 301px;
  flex: none;
  box-sizing: border-box;
  border-right: 1px solid #c3c3c3;
  background: #f5f5f5;
  display: flex;
  flex-direction: column;
}

.tree-head {
  height: 67px;
  box-sizing: border-box;
  background: #eee;
  border-bottom: 1px solid #c3c3c3;
  padding: 6px 0 0 8px;
}

.tree-search {
  display: flex;
  align-items: center;
}

.search-input {
  width: 236px;
  height: 26px;
  margin: 0 0 0 6px;
  box-sizing: border-box;
  border: 1px solid #bbb;
  border-radius: 2px;
  padding: 0 8px;
  background: #fff;
  font: 11px 'DejaVu Sans', sans-serif;
}

.search-input::placeholder {
  color: #b0b0b0;
}

.tree-collapse {
  margin-left: 21px;
}

.tree-actions {
  display: flex;
  margin-top: 10px;
}

.tree-act {
  width: 28.200px;
  display: flex;
  justify-content: center;
}

.tree-more {
  margin-left: 36px;
}

.tree {
  position: relative;
  flex: 1;
  padding-top: 15px;
}

.tree-node {
  height: 26px;
  box-sizing: border-box;
  display: flex;
  align-items: center;
  gap: 6px;
  padding-left: 38px;
  padding-top: 2px;
}

.tree-root {
  padding-left: 18px;
}

.tree-selected {
  background: #edf3fa;
  border: 1px solid #3a8fdc;
  border-right-color: #9cc4ea;
  padding-left: 37px;
  padding-top: 1px;
}

.tree-line-v {
  position: absolute;
  left: 9px;
  top: 36px;
  width: 1px;
  height: 44px;
  background: #ddd;
}

.tree-line-h1, .tree-line-h2 {
  position: absolute;
  left: 9px;
  width: 24px;
  height: 1px;
  background: #ddd;
}

.tree-line-h1 { top: 53px; }
.tree-line-h2 { top: 79px; z-index: 1; }

.tree-toggle {
  position: absolute;
  left: 5px;
  top: 24px;
}

/* module content */
.content {
  flex: 1;
  min-width: 0;
  display: flex;
  flex-direction: column;
}

.docheader {
  height: 67px;
  flex: none;
  box-sizing: border-box;
  background: #eee;
  border-bottom: 1px solid #c3c3c3;
  padding: 0 16px 0 24px;
}

.path {
  height: 35px;
  display: flex;
  align-items: center;
  justify-content: flex-end;
  gap: 4px;
  font-size: 12px;
  box-sizing: border-box;
}

.path-folder {
  margin: 0 1px 0 6px;
}

.doc-buttons {
  display: flex;
}

.btn {
  height: 26px;
  box-sizing: border-box;
  display: inline-flex;
  align-items: center;
  gap: 4px;
  padding: 0 8px;
  background: #eee;
  border: 1px solid #c3c3c3;
  border-radius: 2px;
  box-shadow: 0 1px 1px rgba(0, 0, 0, 0.06);
  font-size: 10.500px;
  color: #1a1a1a;
  white-space: nowrap;
}

.btn-create { width: 134px; }
.btn-edit { width: 144px; margin-left: 9px; padding: 0 6px 0 9px; gap: 2px; }
.btn-icon { width: 34px; justify-content: center; padding: 0; }

.spacer { flex: 1; }

.btn-group {
  display: flex;
}

.btn-group .btn-icon + .btn-icon {
  margin-left: -1px;
}

.btn-note { margin-left: 8px; }
.btn-view { width: 56px; margin-left: 8px; gap: 6px; }
.btn-share { width: 46px; margin-left: 14px; gap: 7px; padding: 0 6px 0 10px; }

.caret {
  width: 0;
  height: 0;
  border-left: 3px solid transparent;
  border-right: 3px solid transparent;
  border-top: 3px solid #222;
}

.body {
  padding: 24px 16px 0 24px;
  flex: 1;
  min-height: 0;
}

.title-row {
  display: flex;
  align-items: center;
  justify-content: space-between;
  height: 30px;
  margin-bottom: 8px;
  padding-right: 4px;
}

h1 {
  margin: 0;
  font-size: 22px;
  font-weight: 400;
  line-height: 30px;
  letter-spacing: -0.3px;
}

.panel {
  border: 1px solid #c3c3c3;
  border-radius: 3px 3px 0 0;
}

.panel-head {
  height: 81px;
  box-sizing: border-box;
  background: #f5f5f5;
  border-bottom: 1px solid #c3c3c3;
  padding: 13px 16px 0;
}

.panel-title {
  display: flex;
  align-items: center;
  gap: 11px;
  height: 16px;
  font-size: 11.700px;
}

.panel-buttons {
  display: flex;
  gap: 4px;
  margin-top: 13px;
}

.btn-new { width: 98px; }
.btn-download { width: 89px; }
.btn-cols { width: 114px; }

.btn-up {
  width: 34px;
  justify-content: center;
  padding: 0;
}

.records {
  width: 100%;
  border-collapse: separate;
  border-spacing: 0;
  table-layout: fixed;
}

.w-check { width: 42px; }
.w-icon { width: 24px; }
.w-actions { width: 203px; }
.w-lang { width: 86px; }

.records th, .records td {
  padding: 0;
  border-bottom: 1px solid #c3c3c3;
  text-align: left;
  vertical-align: middle;
}

.records thead tr {
  height: 35px;
  background: #fff;
}

.records tbody tr {
  height: 47px;
}

.records tbody tr:nth-child(odd) {
  background: #f9f9f9;
}

.records .col-check {
  padding-left: 17px;
  white-space: nowrap;
}

th.col-check .caret {
  display: inline-block;
  vertical-align: 5px;
  margin-left: 7px;
}

.check {
  display: inline-block;
  box-sizing: border-box;
  width: 15px;
  height: 15px;
  border: 1px solid #222;
  border-radius: 2px;
  background: #fff;
  vertical-align: middle;
}

.check-dashed {
  border-style: dashed;
}

.cube {
  margin-left: -1px;
}

.title-head {
  display: flex;
  align-items: center;
  gap: 5px;
}

.col-title {
  font-weight: 700;
}

.col-name {
  color: #333;
}

.actions {
  display: flex;
  gap: 11px;
}

.act-group {
  display: flex;
}

.act {
  width: 30px;
  height: 29px;
  box-sizing: border-box;
  background: #eee;
  border: 1px solid #c3c3c3;
  margin-left: -1px;
  display: flex;
  align-items: center;
  justify-content: center;
}

.act:first-child {
  margin-left: 0;
  border-radius: 2px 0 0 2px;
}

.act:last-child {
  border-radius: 0 2px 2px 0;
}

.act-blank {
  background: #f5f5f5;
}

.act-more {
  margin-left: 0;
  border-radius: 2px;
}

th.col-lang {
  font-style: italic;
  font-weight: 400;
}
```
